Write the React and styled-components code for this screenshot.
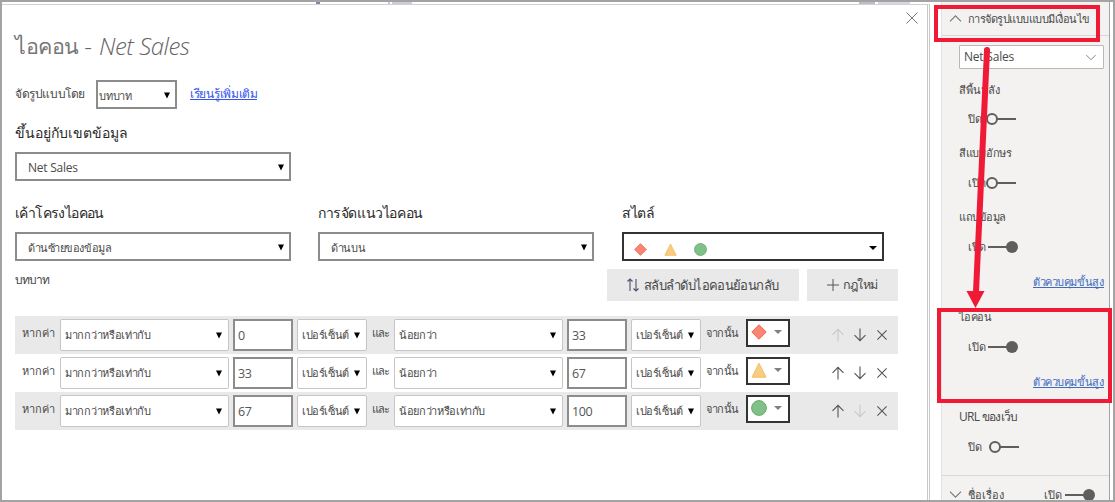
import React from "react";
import styled, { createGlobalStyle } from "styled-components";

const Global = createGlobalStyle`
  * { box-sizing: border-box; }
  html, body { margin: 0; padding: 0; overflow: hidden; background: #fff; }
  body { font-family: "Open Sans", "Noto Sans", sans-serif; font-size: 12px; color: #4a4a4a; }
`;

const Text = styled.span`
  display: block;
  flex: none;
  width: ${(p) => (p.$w ? `${p.$w}px` : "auto")};
  height: ${(p) => p.$h || 20}px;
  line-height: ${(p) => p.$h || 20}px;
  font-size: ${(p) => p.$size || 12}px;
  letter-spacing: ${(p) => p.$track || 0}px;
  margin-top: ${(p) => p.$top || 0}px;
  margin-left: ${(p) => p.$left || 0}px;
  color: ${(p) => p.$color || "inherit"};
  white-space: nowrap;
`;

const Heading = styled(Text)`
  height: 22px;
  line-height: 22px;
  margin-bottom: 8px;
  font-size: 14px;
  color: #2a2a2a;
`;

const Frame = styled.div`
  position: relative;
  display: flex;
  width: 1115px;
  height: 502px;
  border: 2px solid #a3a3a3;
  background: #fff;
  overflow: hidden;
`;

const Main = styled.main`
  width: 928px;
  flex: none;
  display: flex;
  flex-direction: column;
`;

const Ribbon = styled.div`
  display: flex;
  height: 2px;
  flex: none;
`;

const RibbonMark = styled.i`
  width: ${(p) => p.$w}px;
  height: 2px;
  margin-left: ${(p) => p.$left}px;
  background: ${(p) => p.$bg};
`;

const Dialog = styled.section`
  position: relative;
  flex: 1;
  border-top: 1px solid #d2d2d2;
  border-right: 3px double #c8c8c8;
  padding-left: 13px;
`;

const CloseIcon = styled.svg`
  position: absolute;
  right: 9px;
  top: 7px;
`;

const Title = styled.h1`
  margin: 0;
  padding-top: 23px;
  height: 75px;
  display: flex;
  align-items: flex-start;
  font-size: 24px;
  line-height: 36px;
  font-weight: 300;
  color: #666;
  white-space: nowrap;
`;

const TitleLead = styled.span`
  width: 63px;
  font-size: 21.5px;
  letter-spacing: -0.4px;
  color: #777;
`;

const TitleName = styled.em`
  font-weight: 300;
  letter-spacing: -0.5px;
  margin-left: 7px;
`;

const FormatRow = styled.div`
  display: flex;
  align-items: flex-start;
  height: 42px;
`;

const Select = styled.div`
  flex: none;
  display: flex;
  align-items: center;
  justify-content: space-between;
  width: ${(p) => p.$w}px;
  height: ${(p) => p.$h || 29}px;
  padding: 2px 5px 0 ${(p) => p.$pad || 11}px;
  margin-left: ${(p) => p.$left || 0}px;
  border: 2px solid ${(p) => p.$edge || "#8c8c8c"};
  background: #fff;
`;

const RuleSelect = styled(Select)`
  border: 1px solid #c6c6c6;
  border-radius: 2px;
  height: 32px;
  padding: 0 6px 0 4px;
`;

const ValueInput = styled.div`
  flex: none;
  width: 60px;
  height: 32px;
  margin-left: 4px;
  padding: 1px 0 0 3px;
  border: 2px solid #8c8c8c;
  background: #fff;
  font-size: 12.5px;
  letter-spacing: -0.4px;
  line-height: 28px;
  color: #555;
`;

const Link = styled(Text)`
  height: 16px;
  border-bottom: 1px solid currentColor;
`;

const Columns = styled.div`
  display: flex;
  margin-top: 21px;
`;

const Column = styled.div`
  width: ${(p) => p.$w}px;
  flex: none;
`;

const IconRun = styled.div`
  display: flex;
  align-items: center;
  gap: 17px;
  margin: 4px 0 0 -2px;
`;

const Toolbar = styled.div`
  display: flex;
  width: 884px;
  height: 55px;
  padding-top: 8px;
`;

const Button = styled.div`
  display: flex;
  align-items: center;
  width: ${(p) => p.$w}px;
  height: 32px;
  margin-left: ${(p) => p.$left}px;
  padding-left: ${(p) => p.$pad}px;
  background: #e9e9e9;
`;

const Rule = styled.div`
  display: flex;
  align-items: flex-start;
  width: 883px;
  height: 38px;
  padding-top: 3px;
  background: ${(p) => (p.$shade ? "#e9e9e9" : "#fff")};
`;

const IfCell = styled.div`
  width: 45px;
  padding: 4px 0 0 7px;
`;

const JoinCell = styled.div`
  width: ${(p) => p.$w}px;
  padding: 4px 0 0 5px;
`;

const IconSelect = styled.div`
  display: flex;
  align-items: center;
  justify-content: space-between;
  width: 44px;
  height: 28px;
  margin-left: -1px;
  padding: 0 6px 2px 3px;
  border: 2px solid #333;
  background: #fff;
`;

const Actions = styled.div`
  display: flex;
  gap: 8px;
  margin: 9px 0 0 41px;
`;

const CrossCell = styled.div`
  margin: 2px 0 0 2px;
  height: 10px;
  display: flex;
`;

const Pane = styled.aside`
  width: 169px;
  margin-left: 11px;
  flex: none;
  border-left: 1px solid #e2e2e2;
  border-right: 1px solid #a3a3a3;
  background: #f3f2f1;
`;

const PaneHeader = styled.div`
  display: flex;
  align-items: center;
  height: 34px;
  padding-left: 7px;
  border-bottom: 1px solid #d8d8d8;
`;

const FieldSelect = styled.div`
  display: flex;
  align-items: center;
  justify-content: space-between;
  width: 145px;
  height: 24px;
  margin: 9px 0 0 17px;
  padding: 0 7px 0 4px;
  border: 1px solid #b8b8b8;
  border-radius: 1px;
  background: #fff;
`;

const Settings = styled.div`
  padding-top: 11px;
`;

const Group = styled.div`
  height: ${(p) => p.$h}px;
  padding-left: 17px;
`;

const ToggleRow = styled.div`
  display: flex;
  align-items: center;
  height: 20px;
  margin-top: ${(p) => p.$gap}px;
  padding-left: 9px;
`;

const PaneFooter = styled.div`
  display: flex;
  align-items: center;
  height: 38px;
  padding-left: 7px;
  border-top: 1px solid #d8d8d8;
`;

const RedBox = styled.div`
  position: absolute;
  left: ${(p) => p.$x}px;
  top: ${(p) => p.$y}px;
  width: ${(p) => p.$w}px;
  height: ${(p) => p.$h}px;
  border: 4px solid #f01a37;
`;

const Pointer = styled.svg`
  position: absolute;
  left: 958px;
  top: 38px;
`;

const Caret = () => (
  <svg width="6" height="7" viewBox="0 0 6 7"><path d="M0 .5h6L3 6.5z" fill="#000" /></svg>
);
const SmallCaret = ({ color = "#000" }) => (
  <svg width="8" height="4" viewBox="0 0 8 4"><path d="M0 0h8L4 4z" fill={color} /></svg>
);
const Chevron = ({ up, w = 12 }) => (
  <svg width={w} height="7" viewBox="0 0 12 7" fill="none" stroke="#777" strokeWidth="1.1">
    <path d={up ? "M.5 6.3 6 .8l5.500 5.500" : "M.5.7 6 6.2 11.5.7"} />
  </svg>
);
const Shape = ({ kind, s = 13 }) => (
  <svg width={s} height={s} viewBox="0 0 16 16" strokeWidth="1">
    {kind === "diamond" && <path d="M8 .8 15.2 8 8 15.2.8 8z" fill="#fa8475" stroke="#f0643f" />}
    {kind === "triangle" && <path d="M8 1.2 15 15.2H1z" fill="#f8cd83" stroke="#f3bd5d" />}
    {kind === "circle" && <circle cx="8" cy="8" r="7.4" fill="#82c08b" stroke="#62b15f" />}
  </svg>
);
const Arrow = ({ down, off }) => (
  <svg width="14" height="14" viewBox="0 0 14 14" fill="none" stroke={off ? "#c9c9c9" : "#555"} strokeWidth="1.1">
    <path d={down ? "M7 .5v12M1.5 7.2 7 12.7l5.500-5.500" : "M7 13.5v-12M1.5 6.800 7 1.3l5.500 5.500"} />
  </svg>
);
const Cross = () => (
  <svg width="10" height="10" viewBox="0 0 10 10" stroke="#555" strokeWidth="1.1">
    <path d="M.4.4l9.2 9.2M9.6.4.4 9.6" />
  </svg>
);
const Toggle = ({ on }) => (
  <svg width="30" height="14" viewBox="0 0 30 14">
    {on ? (
      <g fill="#605e5c"><path d="M0 6h20v2H0z" /><circle cx="24" cy="7" r="6" /></g>
    ) : (
      <g fill="none" stroke="#605e5c" strokeWidth="2"><circle cx="6" cy="7" r="5" /><path d="M11 7h19" /></g>
    )}
  </svg>
);

const rules = [
  { from: "0", op: "น้อยกว่า", to: "33", icon: "diamond", shade: true, first: true },
  { from: "33", op: "น้อยกว่า", to: "67", icon: "triangle" },
  { from: "67", op: "น้อยกว่าหรือเท่ากับ", to: "100", icon: "circle", shade: true, last: true },
];

const RuleLine = ({ r }) => (
  <Rule $shade={r.shade}>
    <IfCell><Text $size={11} $track={-0.1}>หากค่า</Text></IfCell>
    <RuleSelect $w={169}><Text $size={11} $track={-0.3}>มากกว่าหรือเท่ากับ</Text><Caret /></RuleSelect>
    <ValueInput>{r.from}</ValueInput>
    <RuleSelect $w={70} $left={4}><Text $size={11} $track={-0.4}>เปอร์เซ็นต์</Text><Caret /></RuleSelect>
    <JoinCell $w={27}><Text $size={11} $track={-0.9}>และ</Text></JoinCell>
    <RuleSelect $w={169}><Text $size={11} $track={-0.35}>{r.op}</Text><Caret /></RuleSelect>
    <ValueInput>{r.to}</ValueInput>
    <RuleSelect $w={70} $left={4}><Text $size={11} $track={-0.4}>เปอร์เซ็นต์</Text><Caret /></RuleSelect>
    <JoinCell $w={46}><Text $size={11} $track={-0.4}>จากนั้น</Text></JoinCell>
    <IconSelect><Shape kind={r.icon} s={16} /><SmallCaret color="#808080" /></IconSelect>
    <Actions>
      <Arrow off={r.first} />
      <Arrow down off={r.last} />
      <CrossCell><Cross /></CrossCell>
    </Actions>
  </Rule>
);

const Setting = ({ h, label, track, state, stateW, on, link, size = 11, gap = 10 }) => (
  <Group $h={h}>
    <Text $size={size} $track={track}>{label}</Text>
    <ToggleRow $gap={gap}><Text $size={11} $w={stateW}>{state}</Text><Toggle on={on} /></ToggleRow>
    {link && <Link $size={11} $w={71} $track={-0.42} $left={74} $top={15} $color="#3f6bbf">{link}</Link>}
  </Group>
);

export default function App() {
  return (
    <Frame>
      <Global />
      <Main>
        <Ribbon>
          <RibbonMark $left={314} $w={4} $bg="#8884a8" />
          <RibbonMark $left={68} $w={2} $bg="#ccc" />
          <RibbonMark $left={2} $w={20} $bg="#c9cedd" />
          <RibbonMark $left={447} $w={16} $bg="#b9bdd0" />
          <RibbonMark $left={3} $w={32} $bg="#d5d8e4" />
        </Ribbon>
        <Dialog>
          <CloseIcon width="12" height="12" viewBox="0 0 12 12" stroke="#777" strokeWidth="1">
            <path d="M.5.5l11 11M11.5.5.5 11.5" />
          </CloseIcon>
          <Title><TitleLead>ไอคอน</TitleLead>&nbsp;-<TitleName>Net Sales</TitleName></Title>
          <FormatRow>
            <Text $w={70} $track={-0.4} $top={4}>จัดรูปแบบโดย</Text>
            <Select $w={81} $left={11} $pad={1}><Text $size={11} $track={-0.2}>บทบาท</Text><Caret /></Select>
            <Link $w={67} $track={-0.3} $left={13} $top={4} $color="#3355ee">เรียนรู้เพิ่มเติม</Link>
          </FormatRow>
          <Heading>ขึ้นอยู่กับเขตข้อมูล</Heading>
          <Select $w={276}><Text $track={-0.25}>Net Sales</Text><Caret /></Select>
          <Columns>
            <Column $w={303}>
              <Heading $track={-0.6}>เค้าโครงไอคอน</Heading>
              <Select $w={276}><Text $size={11} $track={-0.45}>ด้านซ้ายของข้อมูล</Text><Caret /></Select>
            </Column>
            <Column $w={304}>
              <Heading $track={-0.4}>การจัดแนวไอคอน</Heading>
              <Select $w={276}><Text $size={11} $track={-0.3}>ด้านบน</Text><Caret /></Select>
            </Column>
            <Column $w={262}>
              <Heading $track={-0.3}>สไตล์</Heading>
              <Select $w={262} $pad={12} $edge="#333">
                <IconRun><Shape kind="diamond" /><Shape kind="triangle" /><Shape kind="circle" /></IconRun>
                <SmallCaret />
              </Select>
            </Column>
          </Columns>
          <Toolbar>
            <Text $w={37} $track={-0.9} $h={22}>บทบาท</Text>
            <Button $w={192} $left={555} $pad={20}>
              <svg width="12" height="14" viewBox="0 0 12 14" fill="none" stroke="#4f4f6a" strokeWidth="1.1">
                <path d="M3 13V1M.5 3.500 3 1l2.500 2.500M9 1v12M6.500 10.500 9 13l2.500-2.500" />
              </svg>
              <Text $size={13} $track={-0.63} $left={5}>สลับลำดับไอคอนย้อนกลับ</Text>
            </Button>
            <Button $w={91} $left={8} $pad={20}>
              <svg width="12" height="12" viewBox="0 0 12 12" stroke="#555"><path d="M6 0v12M0 6h12" /></svg>
              <Text $size={12.5} $track={-0.8} $left={4}>กฎใหม่</Text>
            </Button>
          </Toolbar>
          {rules.map((r) => <RuleLine key={r.from} r={r} />)}
        </Dialog>
      </Main>
      <Pane>
        <PaneHeader><Chevron up w={13} /><Text $size={11} $track={-0.52} $left={6}>การจัดรูปแบบแบบมีเงื่อนไข</Text></PaneHeader>
        <FieldSelect><Text $track={-0.2}>Net Sales</Text><Chevron w={10} /></FieldSelect>
        <Settings>
          <Setting h={63} gap={9} label="สีพื้นหลัง" track={-0.1} state="ปิด" stateW={18} />
          <Setting h={64} label="สีแบบอักษร" track={-0.3} state="เปิด" stateW={18} />
          <Setting h={100} label="แถบข้อมูล" track={-0.5} state="เปิด" stateW={20} on link="ตัวควบคุมขั้นสูง" />
          <Setting h={100} label="ไอคอน" track={-0.6} state="เปิด" stateW={20} on link="ตัวควบคุมขั้นสูง" />
          <Setting h={68} size={12} label="URL ของเว็บ" track={-0.7} state="ปิด" stateW={21} />
        </Settings>
        <PaneFooter>
          <Chevron w={13} />
          <Text $size={11} $w={76} $left={6}>ชื่อเรื่อง</Text>
          <Text $size={11} $w={21}>เปิด</Text>
          <Toggle on />
        </PaneFooter>
      </Pane>
      <RedBox $x={932} $y={3} $w={166} $h={37} />
      <RedBox $x={935} $y={306} $w={175} $h={95} />
      <Pointer width="50" height="275" viewBox="960 40 50 275">
        <path d="M987 50 976 292" stroke="#f01a37" strokeWidth="6" strokeLinecap="round" />
        <path d="M966.500 291h18L975.500 308z" fill="#f01a37" />
      </Pointer>
    </Frame>
  );
}
